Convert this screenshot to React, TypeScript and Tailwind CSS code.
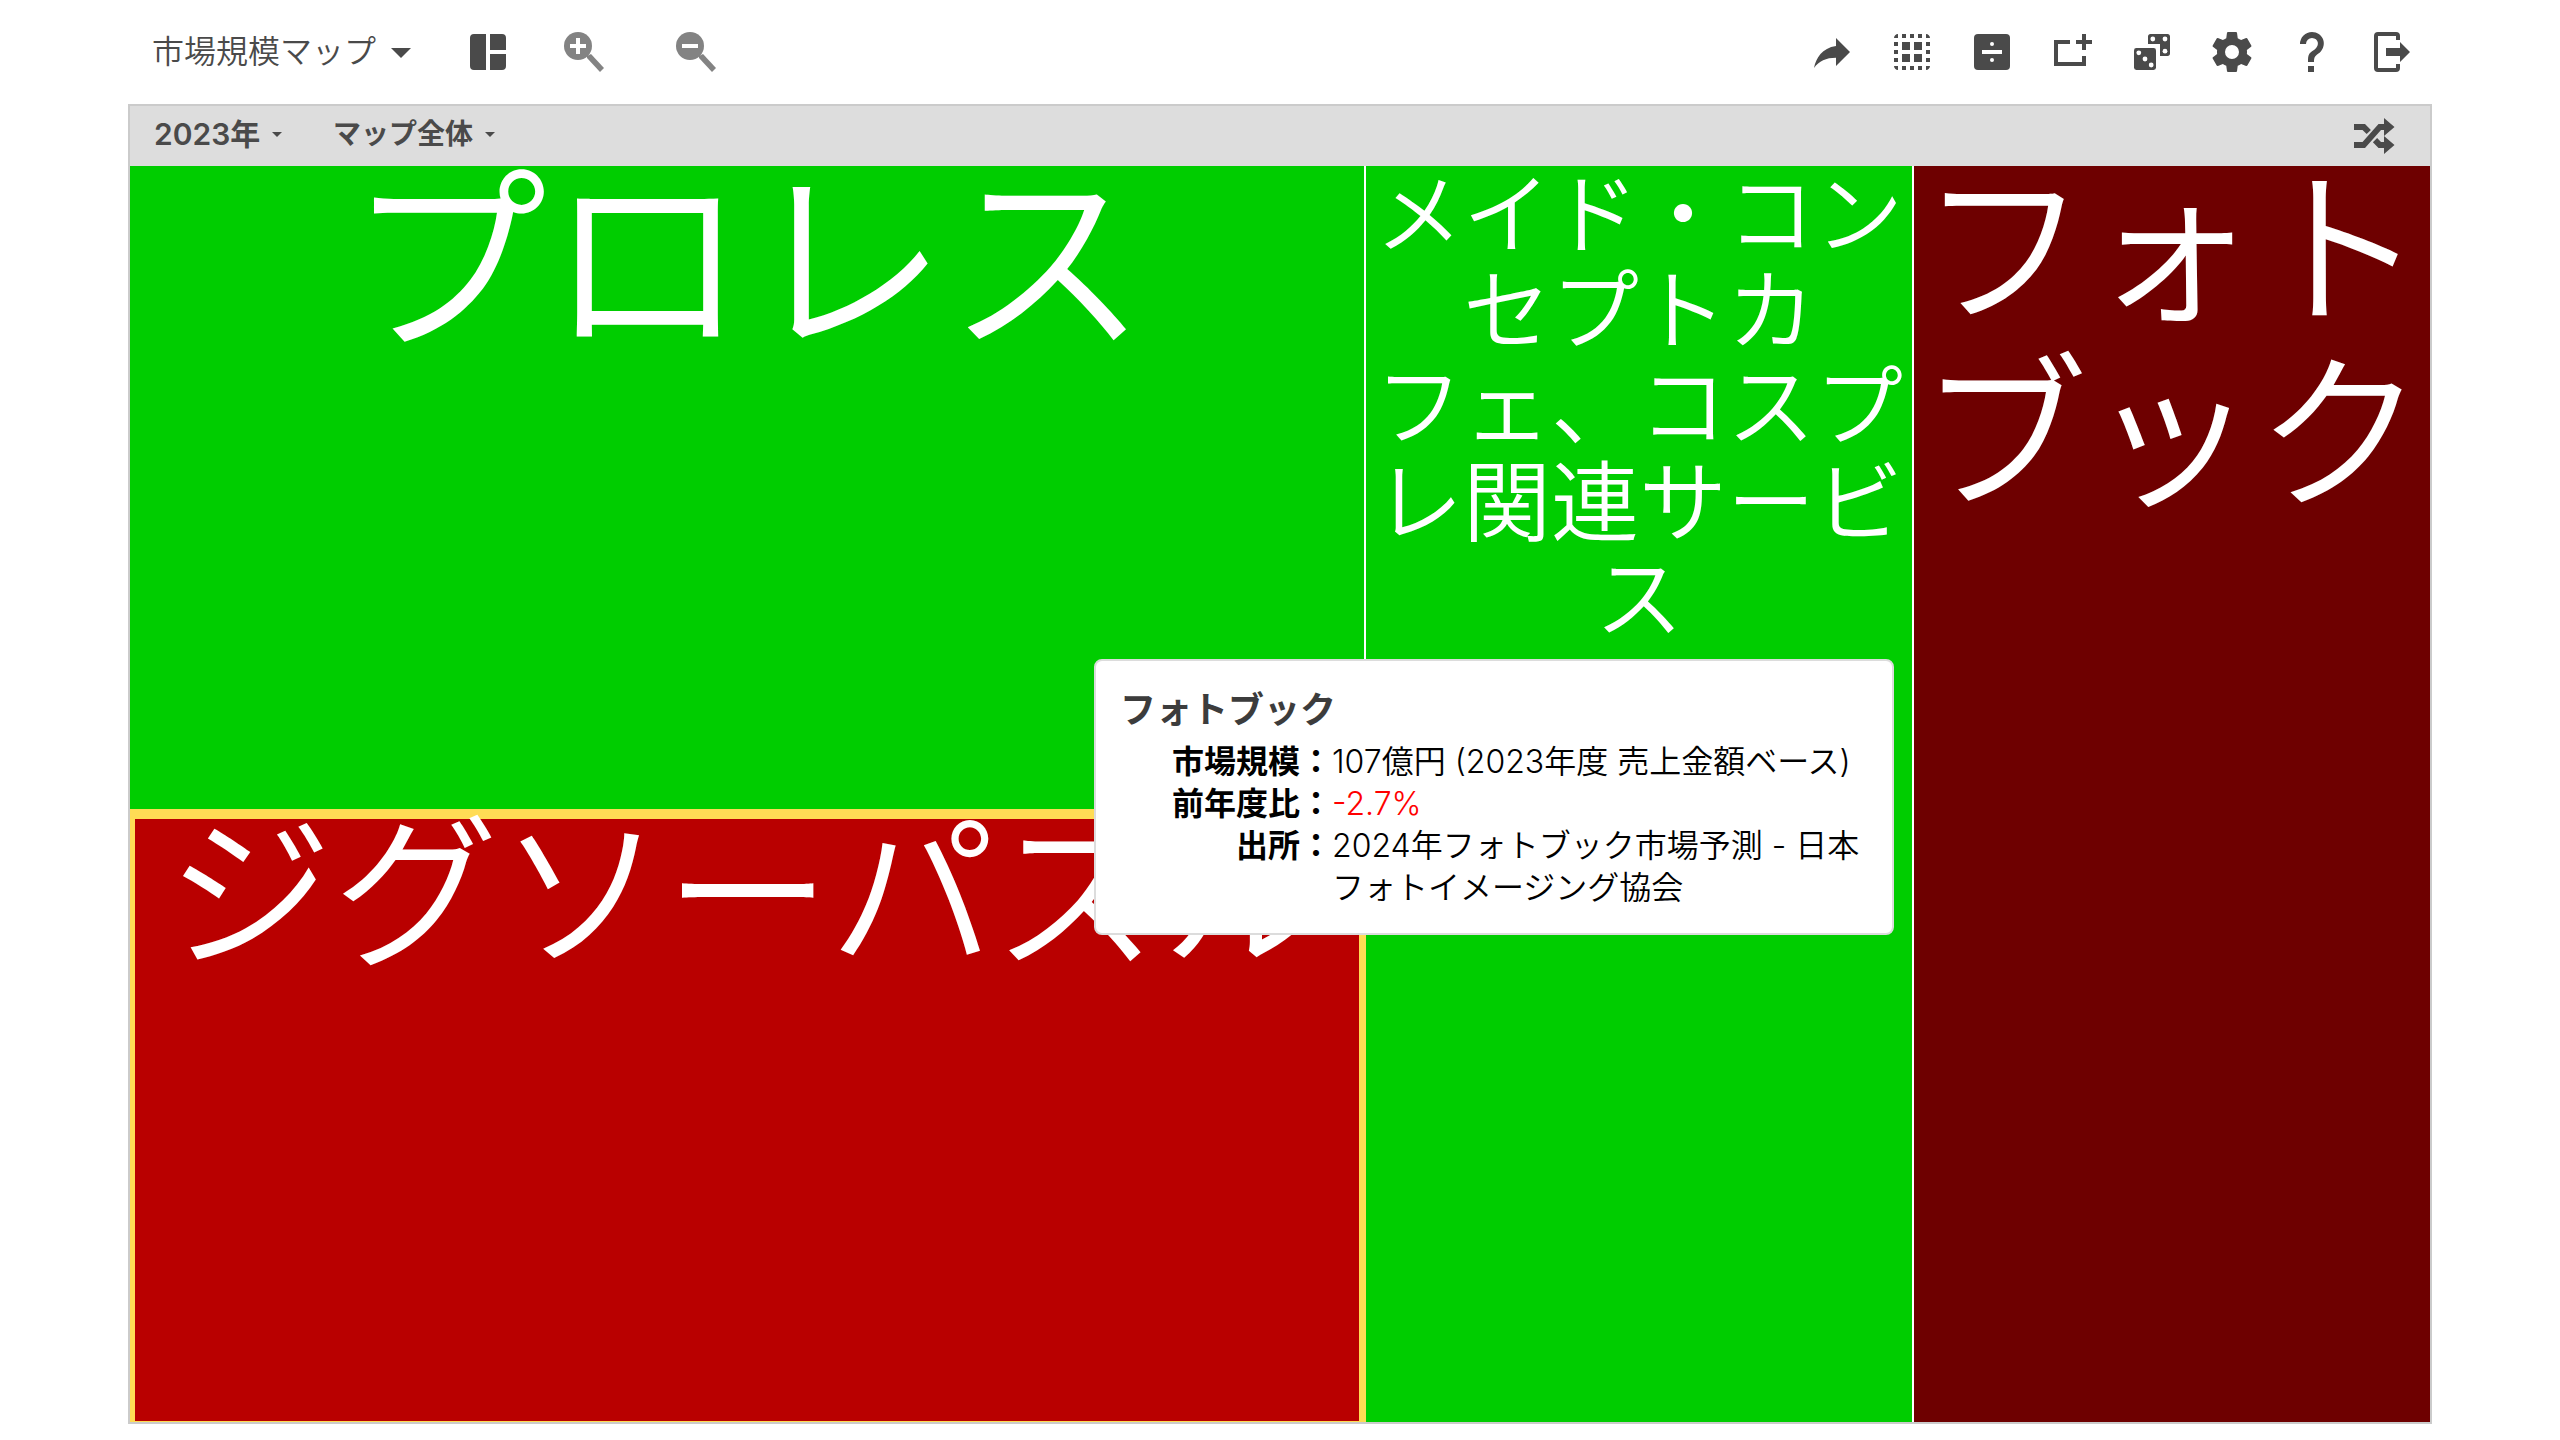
import type { ReactNode } from "react";

interface IconProps {
  children: ReactNode;
  className?: string;
}

function Icon({ children, className = "size-12" }: IconProps) {
  return (
    <svg viewBox="0 0 24 24" fill="currentColor" aria-hidden="true" className={className}>
      {children}
    </svg>
  );
}

interface PickerProps {
  label: string;
  value: string;
  selectClass: string;
  caretClass: string;
}

function Picker({ label, value, selectClass, caretClass }: PickerProps) {
  return (
    <div className="flex items-center">
      <select aria-label={label} defaultValue={value} className={selectClass}>
        <option value={value}>{value}</option>
      </select>
      <Icon className={caretClass}>
        <path d="M7 10l5 5 5-5z" />
      </Icon>
    </div>
  );
}

function ZoomIcon({ plus }: { plus?: boolean }) {
  return (
    <svg viewBox="0 0 48 48" aria-hidden="true" className="size-12">
      <circle cx="18" cy="18" r="14" fill="currentColor" />
      <path d="M27 28l4-2 13 14-4 4-13-14z" fill="currentColor" />
      <path d={plus ? "M10 16h6v-6h4v6h6v4h-6v6h-4v-6h-6z" : "M10 16h16v4H10z"} fill="white" />
    </svg>
  );
}

const dots = [3, 7, 11, 15, 19];

const actions: { label: string; icon: ReactNode }[] = [
  {
    label: "共有",
    icon: <path d="M21 12l-7-7v4C7 10 4 15 3 20c2.5-3.5 6-5.1 11-5.1V19z" />,
  },
  {
    label: "すべて選択",
    icon: (
      <>
        {dots.slice(1, 4).map((p) => (
          <path
            key={p}
            d={`M${p} 3h2v2h-2zM${p} 19h2v2h-2zM3 ${p}h2v2H3zM19 ${p}h2v2h-2z`}
          />
        ))}
        <path d="M5 3v2H3c0-1.100.9-2 2-2zM19 3c1.100 0 2 .9 2 2h-2zM3 19h2v2c-1.100 0-2-.9-2-2zM19 19h2c0 1.100-.9 2-2 2z" />
        <path d="M7 7h4v4H7zM13 7h4v4h-4zM7 13h4v4H7zM13 13h4v4h-4z" />
      </>
    ),
  },
  {
    label: "割合",
    icon: (
      <>
        <rect x="3" y="3" width="18" height="18" rx="2" />
        <path d="M7 11h10v2H7z" fill="white" />
        <circle cx="12" cy="8" r="1" fill="white" />
        <circle cx="12" cy="16" r="1" fill="white" />
      </>
    ),
  },
  {
    label: "追加",
    icon: <path d="M3 6h8v2H5v9h12v-3h2v5H3zM17 3h2v3h3v2h-3v3h-2V8h-3V6h3z" />,
  },
  {
    label: "ランダム",
    icon: (
      <>
        <path d="M11.200 3h8.600C20.500 3 21 3.500 21 4.200v8.600c0 .7-.5 1.200-1.200 1.200H16V8h-6V4.200C10 3.500 10.500 3 11.200 3z" />
        <rect x="3" y="10" width="11" height="11" rx="1.200" />
        <g fill="white">
          <circle cx="12.400" cy="5.500" r="1.200" />
          <circle cx="18.500" cy="5.500" r="1.200" />
          <circle cx="18.500" cy="11.600" r="1.200" />
          <circle cx="5.400" cy="12.400" r="1.200" />
          <circle cx="8.500" cy="15.500" r="1.200" />
          <circle cx="11.600" cy="18.500" r="1.200" />
        </g>
      </>
    ),
  },
  {
    label: "設定",
    icon: (
      <path d="M12,15.5A3.5,3.5 0 0,1 8.5,12A3.5,3.5 0 0,1 12,8.5A3.5,3.5 0 0,1 15.5,12A3.5,3.5 0 0,1 12,15.5M19.43,12.97C19.47,12.65 19.5,12.33 19.5,12C19.5,11.67 19.47,11.34 19.43,11L21.54,9.37C21.73,9.22 21.78,8.95 21.66,8.73L19.66,5.27C19.54,5.05 19.27,4.96 19.05,5.05L16.56,6.05C16.04,5.66 15.5,5.32 14.87,5.07L14.5,2.42C14.46,2.18 14.25,2 14,2H10C9.75,2 9.54,2.18 9.5,2.42L9.13,5.07C8.5,5.32 7.96,5.66 7.44,6.05L4.95,5.05C4.73,4.96 4.46,5.05 4.34,5.27L2.34,8.73C2.21,8.95 2.27,9.22 2.46,9.37L4.57,11C4.53,11.34 4.5,11.67 4.5,12C4.5,12.33 4.53,12.65 4.57,12.97L2.46,14.63C2.27,14.78 2.21,15.05 2.34,15.27L4.34,18.73C4.46,18.95 4.73,19.03 4.95,18.95L7.44,17.94C7.96,18.34 8.5,18.68 9.13,18.93L9.5,21.58C9.54,21.82 9.75,22 10,22H14C14.25,22 14.46,21.82 14.5,21.58L14.87,18.93C15.5,18.67 16.04,18.34 16.56,17.94L19.05,18.95C19.27,19.03 19.54,18.95 19.66,18.73L21.66,15.27C21.78,15.05 21.73,14.78 21.54,14.63L19.43,12.97Z" />
    ),
  },
  {
    label: "ヘルプ",
    icon: (
      <path d="M10,19H13V22H10V19M12,2C17.35,2.22 19.68,7.62 16.5,11.67C15.67,12.67 14.33,13.33 13.67,14.17C13,15 13,16 13,17H10C10,15.33 10,13.92 10.67,12.92C11.33,11.92 12.67,11.33 13.5,10.67C15.92,8.43 15.32,5.26 12,5A3,3 0 0,0 9,8H6A6,6 0 0,1 12,2Z" />
    ),
  },
  {
    label: "ログアウト",
    icon: (
      <path d="M5 2h9a2 2 0 0 1 2 2v2h-2V4H5v16h9v-2h2v2a2 2 0 0 1-2 2H5a2 2 0 0 1-2-2V4a2 2 0 0 1 2-2zM9 10h7V7l5 5-5 5v-3H9z" />
    ),
  },
];

function Toolbar() {
  return (
    <header className="flex items-center justify-between py-7 pl-6 pr-4">
      <div className="flex items-center">
        <Picker
          label="マップの種類"
          value="市場規模マップ"
          selectClass="appearance-none bg-transparent text-[32px] leading-12 font-[350]"
          caretClass="size-12"
        />
        <button type="button" aria-label="レイアウト" className="ml-[39px]">
          <Icon>
            <path d="M5 3h6v18H5a2 2 0 0 1-2-2V5a2 2 0 0 1 2-2zM13 3h6a2 2 0 0 1 2 2v6h-8zM13 13h8v6a2 2 0 0 1-2 2h-6z" />
          </Icon>
        </button>
        <button type="button" aria-label="拡大" className="ml-12 text-[#838383]">
          <ZoomIcon plus />
        </button>
        <button type="button" aria-label="縮小" className="ml-16 text-[#838383]">
          <ZoomIcon />
        </button>
      </div>
      <div className="flex items-center gap-8">
        {actions.map((action) => (
          <button key={action.label} type="button" aria-label={action.label}>
            <Icon>{action.icon}</Icon>
          </button>
        ))}
      </div>
    </header>
  );
}

function Tooltip() {
  return (
    <div
      role="tooltip"
      className="absolute top-[493px] left-[964px] w-[800px] rounded-lg border-2 border-[#dcdcdc] bg-white px-6 pt-[22px] pb-6 text-left text-[32px] leading-[42px] text-black"
    >
      <h2 className="mb-1 text-[36px] leading-[54px] font-bold text-[#3c3c3c]">フォトブック</h2>
      <table className="w-full font-[350]">
        <tbody className="align-top">
          <tr>
            <th scope="row" className="w-[212px] text-right font-bold whitespace-nowrap">市場規模：</th>
            <td>107億円 (2023年度 売上金額ベース)</td>
          </tr>
          <tr>
            <th scope="row" className="text-right font-bold whitespace-nowrap">前年度比：</th>
            <td className="text-[#ff0000]">-2.7%</td>
          </tr>
          <tr>
            <th scope="row" className="text-right font-bold whitespace-nowrap">出所：</th>
            <td>
              2024年フォトブック市場予測 - 日本
              <br />
              フォトイメージング協会
            </td>
          </tr>
        </tbody>
      </table>
    </div>
  );
}

function MarketMap() {
  return (
    <div className="relative grid min-h-0 flex-1 grid-cols-[1236fr_548fr_516fr] text-center font-[350] text-white">
      <div className="grid min-h-0 grid-rows-[643fr_613fr]">
        <div className="min-h-0 border-r-2 border-white bg-[#00cd00]">
          <p className="-mt-1 text-[200px] leading-none">プロレス</p>
        </div>
        <div className="min-h-0 border-t-10 border-r-7 border-b border-l-5 border-[#ffdc55] bg-[#b90000]">
          <p className="-mt-2 text-[166px] leading-none whitespace-nowrap">ジグソーパズル</p>
        </div>
      </div>
      <div className="border-r-2 border-white bg-[#00cd00]">
        <p className="text-[88px] leading-24 whitespace-nowrap">
          メイド・コン
          <br />
          セプトカ
          <br />
          フェ、コスプ
          <br />
          レ関連サービ
          <br />
          ス
        </p>
      </div>
      <div className="bg-[#6e0000]">
        <p className="-mt-2 text-[168px] leading-[184px]">
          フォト
          <br />
          ブック
        </p>
      </div>
      <Tooltip />
    </div>
  );
}

export default function App() {
  return (
    <div
      lang="ja"
      className="flex h-screen flex-col bg-white px-[5%] pb-4 font-['Inter','Noto_Sans_CJK_JP',sans-serif] text-[#4a4a4a]"
    >
      <Toolbar />
      <main className="flex min-h-0 flex-1 flex-col border-2 border-[#cbcbcb]">
        <div className="flex h-[60px] shrink-0 items-center justify-between bg-[#dddddd] pr-8 pl-6">
          <div className="flex items-center gap-11 pb-1">
            <Picker
              label="年"
              value="2023年"
              selectClass="appearance-none bg-transparent text-[30px] leading-10 font-semibold"
              caretClass="ml-1 size-6"
            />
            <Picker
              label="表示範囲"
              value="マップ全体"
              selectClass="appearance-none bg-transparent text-[28px] leading-10 font-semibold"
              caretClass="ml-1 size-6"
            />
          </div>
          <button type="button" aria-label="シャッフル">
            <Icon>
              <path d="M17,3L22.25,7.5L17,12L22.25,16.5L17,21V18H14.26L11.44,15.18L13.56,13.06L15.5,15H17V12L17,9H15.5L7.5,18H2V15H6.26L14.26,6H17V3M2,6H7.5L10.44,8.94L8.32,11.06L6.26,9H2V6Z" />
            </Icon>
          </button>
        </div>
        <MarketMap />
      </main>
    </div>
  );
}
